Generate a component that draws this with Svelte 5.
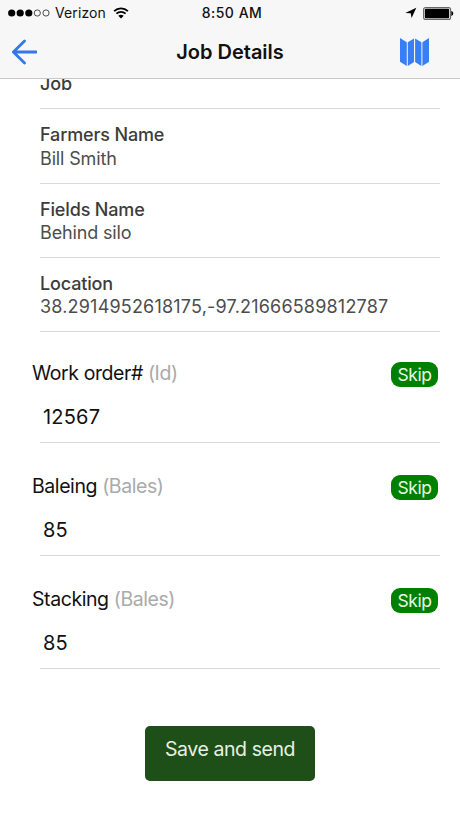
<script lang="ts">
  interface Detail {
    label: string;
    value: string;
    numeric?: boolean;
  }

  interface Task {
    name: string;
    unit: string;
    amount: string;
  }

  const details: Detail[] = [
    { label: 'Farmers Name', value: 'Bill Smith' },
    { label: 'Fields Name', value: 'Behind silo' },
    { label: 'Location', value: '38.2914952618175,-97.21666589812787', numeric: true }
  ];

  let tasks: Task[] = $state([
    { name: 'Work order#', unit: 'Id', amount: '12567' },
    { name: 'Baleing', unit: 'Bales', amount: '85' },
    { name: 'Stacking', unit: 'Bales', amount: '85' }
  ]);

  function skip(task: Task) {
    task.amount = '';
  }
</script>

<div class="screen">
  <header class="header">
    <div class="status-bar">
      <div class="carrier">
        <svg class="signal" width="42" height="8" viewBox="0 0 42 8">
          <circle cx="3.7" cy="4" r="3.6" />
          <circle cx="12.2" cy="4" r="3.6" />
          <circle cx="20.8" cy="4" r="3.6" />
          <circle class="empty" cx="29.3" cy="4" r="3.1" />
          <circle class="empty" cx="38" cy="4" r="3.1" />
        </svg>
        <span class="carrier-name">Verizon</span>
        <svg class="wifi" width="16" height="12" viewBox="0 0 16 12">
          <path d="M1.1 4.2C5 .4 11 .4 14.9 4.2" />
          <path d="M3.4 6.7c2.6-2.5 6.6-2.5 9.2 0" />
          <path class="dot" d="M5.3 8.8c1.6-1.4 3.8-1.4 5.4 0L8 11.5z" />
        </svg>
      </div>
      <span class="time">8:50 AM</span>
      <div class="power">
        <svg width="12" height="12" viewBox="0 0 12 12">
          <path d="M11.3.8 6.6 11 5.7 6.2.3 6z" />
        </svg>
        <svg width="31" height="13" viewBox="0 0 31 13">
          <rect class="case" x=".6" y=".6" width="27" height="11.8" rx="2" />
          <rect x="1.8" y="1.8" width="24.4" height="9.4" rx="1" />
          <path d="M28.3 4.1c2.6.5 2.6 4.3 0 4.8z" />
        </svg>
      </div>
    </div>
    <div class="nav">
      <button class="icon-button" aria-label="Back">
        <svg class="back" width="26" height="26" viewBox="0 0 26 26">
          <path d="M13.5 2.1 2.4 13l11.1 10.9M2.4 13H25.6" />
        </svg>
      </button>
      <h1>Job Details</h1>
      <button class="icon-button" aria-label="Map">
        <svg class="map" width="30" height="28" viewBox="0 0 30 28">
          <path d="M0 0 6.8 4.3V28L0 23.8zM7.8 4.3 14 .4V24.1L7.8 28zM15.1.4 21.4 4.3V28l-6.3-3.9zM22.4 4.3 29 0V23.8L22.4 28z" />
        </svg>
      </button>
    </div>
  </header>

  <main>
    <div class="detail job">
      <span class="detail-label">Job</span>
    </div>
    {#each details as detail}
      <div class="detail">
        <span class="detail-label">{detail.label}</span>
        <span class="detail-value" class:numeric={detail.numeric}>{detail.value}</span>
      </div>
    {/each}

    <div class="tasks">
      {#each tasks as task}
        <section class="task">
          <div class="task-head">
            <label for={task.name}>{task.name} <span class="unit">({task.unit})</span></label>
            <button class="skip" onclick={() => skip(task)}>Skip</button>
          </div>
          <input id={task.name} type="text" bind:value={task.amount} />
        </section>
      {/each}
    </div>

    <button class="save">Save and send</button>
  </main>
</div>

<style>
  :global(body) {
    background: #fff;
  }

  .screen {
    height: 818px;
    display: flex;
    flex-direction: column;
    overflow: hidden;
    font-family: Inter, 'Liberation Sans', sans-serif;
    color: #111;
  }

  button,
  input {
    font-family: inherit;
    border: none;
    padding: 0;
  }

  svg {
    display: block;
  }

  .header {
    flex: none;
    box-sizing: border-box;
    height: 79px;
    background: #f7f7f7;
    border-bottom: 1px solid #c9c9c9;
    position: relative;
  }

  .status-bar {
    height: 26px;
    padding: 0 6px 0 8px;
    display: grid;
    grid-template-columns: 1fr auto 1fr;
    align-items: center;
    font-size: 14px;
    line-height: 26px;
  }

  .carrier,
  .power {
    display: flex;
    align-items: center;
  }

  .carrier-name {
    margin: 0 7px 0 5px;
    letter-spacing: 0.1px;
  }

  .signal .empty {
    fill: none;
    stroke: #222;
    stroke-width: 0.8;
  }

  .wifi path {
    fill: none;
    stroke: #000;
    stroke-width: 1.8;
  }

  .wifi .dot {
    fill: #000;
    stroke: none;
  }

  .time {
    padding-left: 2px;
    font-weight: 500;
    letter-spacing: 0.5px;
  }

  .power {
    justify-content: flex-end;
    gap: 6px;
  }

  .power .case {
    fill: #fff;
    stroke: #666;
    stroke-width: 1.1;
  }

  .nav {
    height: 52px;
    padding: 0 30px 0 11px;
    display: flex;
    align-items: center;
    justify-content: space-between;
  }

  /* the buttons differ in width, so the title is centred over the whole bar */
  h1 {
    position: absolute;
    left: 0;
    right: 0;
    margin: 0;
    font-size: 20px;
    font-weight: 600;
    line-height: 50px;
    text-align: center;
    pointer-events: none;
  }

  .icon-button {
    background: none;
  }

  .back path {
    fill: none;
    stroke: #3478e8;
    stroke-width: 2.8;
    stroke-linecap: round;
    stroke-linejoin: round;
  }

  .map path {
    fill: #387ef5;
  }

  main {
    display: flex;
    flex-direction: column;
  }

  .detail {
    box-sizing: border-box;
    height: 74.2px;
    margin: 0 20px 0 40px;
    padding-top: 14px;
    border-bottom: 1px solid #d9d9d9;
    display: flex;
    flex-direction: column;
    font-size: 18px;
    line-height: 23.4px;
    color: #4d4d4d;
  }

  .job {
    height: 37.4px;
    margin-top: -7px;
    padding-top: 0;
  }

  .detail-label {
    font-weight: 500;
    color: #3c3c3c;
    letter-spacing: -0.15px;
  }

  .detail-value {
    letter-spacing: -0.15px;
  }

  .detail-value.numeric {
    letter-spacing: 0.19px;
  }

  .tasks {
    margin-top: -1.4px;
  }

  .task {
    height: 112.8px;
    padding: 0 20px 0 32px;
    box-sizing: border-box;
    display: flex;
    flex-direction: column;
  }

  .task-head {
    height: 57px;
    padding: 30.6px 2px 0 0;
    box-sizing: border-box;
    display: flex;
    justify-content: space-between;
    align-items: flex-start;
    font-size: 19.5px;
    line-height: 24px;
    letter-spacing: -0.42px;
  }

  .unit {
    color: #aaa;
  }

  .skip {
    width: 47px;
    height: 25px;
    margin-top: 0.9px;
    border-radius: 9px;
    background: #008000;
    color: #e9f8e9;
    font-size: 17.5px;
    line-height: 25px;
    letter-spacing: -0.4px;
  }

  input {
    flex: 1;
    min-height: 0;
    box-sizing: border-box;
    margin-left: 8px;
    padding: 5px 3px 0;
    border-bottom: 1px solid #d9d9d9;
    background: none;
    color: #111;
    font-size: 20px;
    letter-spacing: 0.2px;
    outline: none;
  }

  .save {
    align-self: center;
    width: 170px;
    height: 55px;
    margin-top: 57px;
    padding-bottom: 9px;
    border-radius: 5px;
    background: #1e4f18;
    color: #e8f0e6;
    font-size: 19.5px;
    letter-spacing: -0.42px;
  }
</style>
